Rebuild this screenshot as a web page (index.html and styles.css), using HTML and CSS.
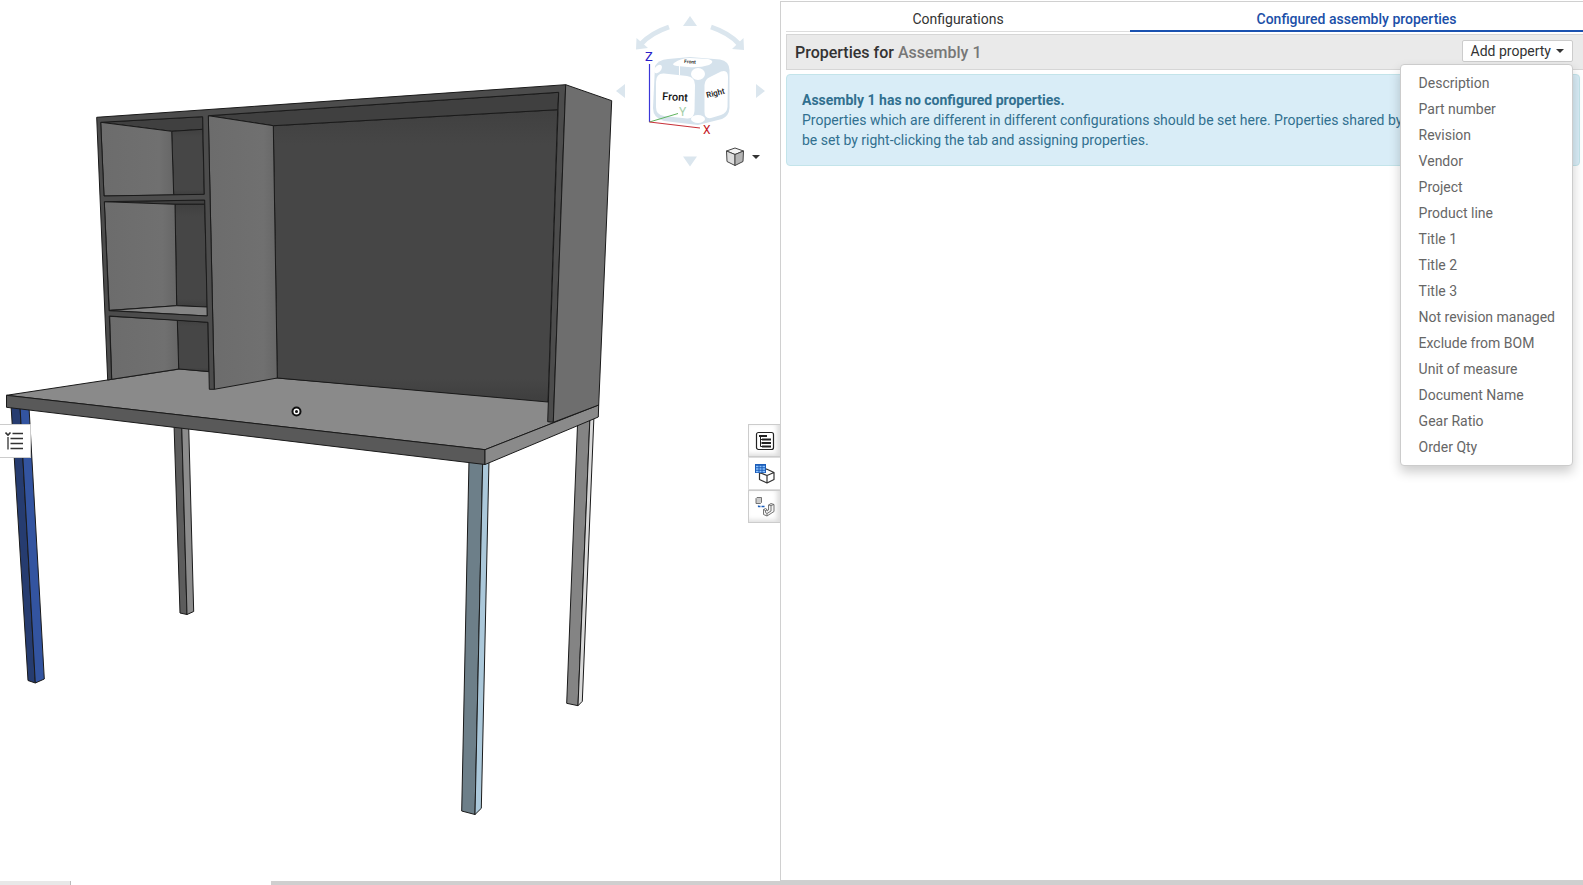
FILE: index.html
```html
<!DOCTYPE html>
<html lang="en">
<head>
    <meta charset="UTF-8">
    <meta name="viewport" content="width=device-width, initial-scale=1.0">
    <title>Assembly 1</title>
    <link rel="stylesheet" href="styles.css">
</head>
<body>
    <main class="workspace">
        <section class="viewport" aria-label="3D view">
            <svg class="scene" viewBox="0 0 780 880" preserveAspectRatio="xMinYMin meet">
                <defs>
                    <linearGradient id="side" x1="0" y1="0" x2="1" y2="0">
                        <stop offset="0" stop-color="#6c6c6c"/>
                        <stop offset="0.8" stop-color="#707070"/>
                        <stop offset="1" stop-color="#666"/>
                    </linearGradient>
                    <linearGradient id="back" x1="0" y1="0" x2="0" y2="1">
                        <stop offset="0" stop-color="#404040"/>
                        <stop offset="0.12" stop-color="#464646"/>
                        <stop offset="0.92" stop-color="#464646"/>
                        <stop offset="1" stop-color="#3e3e3e"/>
                    </linearGradient>
                </defs>
                <g class="edges">
                    <!-- legs -->
                    <polygon fill="#263c70" points="11,405 20,406 35.3,683 28,680.5"/>
                    <polygon fill="#3354a0" points="20,406 29,407 44.3,679 35.3,683"/>
                    <polygon fill="#5c5c5c" points="174,424 181.7,425 187,614.5 180,613"/>
                    <polygon fill="#8c8c8c" points="181.7,425 188.7,426 193.7,611.5 187,614.5"/>
                    <polygon fill="#6d7f89" points="469,460 482.7,462 475,814.5 461.7,811"/>
                    <polygon fill="#abc8da" points="482.7,462 489,460 481.3,808.3 475,814.5"/>
                    <polygon fill="#848484" points="577.7,420 590,416 578,705.7 566.7,703.3"/>
                    <polygon fill="#d8d8d8" points="590,416 594,415 582.3,701.3 578,705.7"/>
                    <!-- desk top -->
                    <polygon fill="#8a8a8a" points="6.5,395.3 180,369 277,378 598.7,405 485,449.7"/>
                    <polygon fill="#595959" points="6.5,395.3 485,449.7 485,464.5 6.5,407.3"/>
                    <polygon fill="#8a8a8a" points="485,449.7 598.7,405 598.3,417 485,464.5"/>
                    <!-- small compartments -->
                    <polygon fill="#404040" points="100.7,122.3 202.7,116.7 202.7,129.3 171.7,131.3"/>
                    <polygon fill="url(#back)" points="171.7,131.3 202.7,129.3 204.3,195 173.7,195"/>
                    <polygon fill="url(#side)" points="100.7,122.3 171.7,131.3 173.7,195 104,196"/>
                    <polygon fill="#404040" points="104.3,201.7 204.7,200 204.7,204.3 175,204.3"/>
                    <polygon fill="url(#back)" points="175,204.3 204.7,204.3 207.3,307 176.7,305.7"/>
                    <polygon fill="url(#side)" points="104.3,201.7 175,204.3 176.7,305.7 109.3,310.3"/>
                    <polygon fill="#858585" points="109.3,310.5 176.7,305.7 207.3,307 207.3,316"/>
                    <polygon fill="url(#back)" points="177.3,320 208,322.3 208.7,371.5 178.7,369"/>
                    <polygon fill="url(#side)" points="109.7,316.3 177.3,320 178.7,369 111.7,379.3"/>
                    <!-- large compartment -->
                    <polygon fill="url(#back)" points="273.3,125.7 557.7,109.7 548,402 277.3,378"/>
                    <polygon fill="#404040" points="208.3,115.7 558.7,92.3 557.7,109.7 273.3,125.7"/>
                    <polygon fill="url(#side)" points="208.3,115.7 273.3,125.7 277.3,378 214.3,389.3"/>
                    <!-- frame -->
                    <path fill="#4c4c4c" d="M96.7 117.3 565.7 84.7 553.3 422.3 547.7 421.7 558.7 92.3 208.3 115.7 214.3 389.3 209.3 389.3 208 322.3 109.3 316 111.7 379.3 107.7 380ZM100.7 122.3 104 196 204.3 194.3 202.7 116.7ZM104.3 201.7 109 310.7 207.3 316 204.7 200Z"/>
                    <polygon fill="#6e6e6e" points="565.7,84.7 611.7,100.7 598.7,405 553.3,422.3"/>
                </g>
                <circle cx="296.5" cy="411.5" r="4" fill="#fff" stroke="#111" stroke-width="2"/>
                <circle cx="296.5" cy="411.5" r="1.5" fill="#111"/>
            </svg>

            <svg class="view-cube" viewBox="610 10 160 160" width="160" height="160">
                <g fill="#dbe6ee">
                    <path d="M690 16 697 26H683ZM683 156.500H697L690 166.500ZM616 91 625 84V98ZM765 91 756 84V98Z"/>
                    <path d="M636.500 38 636 49.500 648 48ZM743.500 38 744 50 732 49Z"/>
                    <path d="M655 66Q658 60 668 59L690 57 720 59.500Q729 61 729.500 70V108Q729 116 722 119L698 125 664 121Q653 118 653 108Z" fill="#d5e2ec"/>
                </g>
                <g fill="none" stroke="#dbe6ee" stroke-width="5">
                    <path d="M669 27Q651 33 641 44"/>
                    <path d="M711 27Q729 33 739 44"/>
                </g>
                <g fill="#fff">
                    <path d="M656 82Q656 73 664 73.500L687 76Q695 77 695 85L694.500 111Q694 119 687 118.500L664 116Q656 115 656 107Z"/>
                    <path d="M704.500 85Q705 79 710 77L721 71.500Q728 69 728 77L727.500 107Q727 113 721 115L711 118Q704.500 119 704.500 112Z"/>
                    <path d="M674 63Q681 58 690 58L708 59Q716 61 709 65 700 68 688 67L677 66Q671 65 674 63Z"/>
                    <ellipse cx="698" cy="74" rx="7" ry="6"/>
                    <ellipse cx="698" cy="119" rx="7" ry="4"/>
                    <ellipse cx="658" cy="69" rx="5" ry="3" transform="rotate(-50 658 69)"/>
                    <path d="M679 65h1v10h-1z"/>
                </g>
                <text class="cube-face" x="662" y="100" font-size="11" transform="rotate(3 662 100)">Front</text>
                <text class="cube-face" x="707" y="98" font-size="8" transform="rotate(-14 707 98)">Right</text>
                <text class="cube-face" x="684" y="63" font-size="5" transform="rotate(4 684 63)">Front</text>
                <path d="M649.500 64V122" stroke="#3a36d8" stroke-width="1.200"/>
                <path d="M649.500 122 678 113.500" stroke="#5fb45f" stroke-width="1"/>
                <path d="M649.500 122 700 128" stroke="#c8323a" stroke-width="1.200"/>
                <text x="645" y="61" font-size="13" fill="#2a20c8">Z</text>
                <text x="679" y="116" font-size="12" fill="#a5cfa8">Y</text>
                <text x="703" y="134" font-size="12" fill="#c4141c">X</text>
            </svg>

            <button type="button" class="view-button" aria-label="View options">
                <svg viewBox="0 0 20 20" width="20" height="20" stroke="#444" stroke-linejoin="round">
                    <path d="M10 1 18.500 4 10 7.500 1.500 4Z" fill="#f4f4f4"/>
                    <path d="M1.500 4 10 7.500V18.500L2 14.500Z" fill="#ddd"/>
                    <path d="M18.500 4 10 7.500V18.500L18 14.500Z" fill="#b4b4b4"/>
                </svg>
                <span class="caret"></span>
            </button>

            <button type="button" class="tree-button" aria-label="Feature list">
                <svg viewBox="0 0 20 20" width="20" height="20" fill="none" stroke="#333" stroke-width="1.300">
                    <path d="M7.500 2.500H18M5.500 7.500H18M5.500 12.500H18M5.500 17.500H18M3 6V18.500"/>
                    <path d="M.5 1.500 3 4 5.500 1.500" stroke-width="1.600"/>
                </svg>
            </button>

            <div class="side-tabs">
                <button type="button" class="side-tab" aria-label="Bill of materials">
                    <svg viewBox="0 0 20 20" width="20" height="20" fill="none" stroke="#222">
                        <rect x="1.500" y="1.500" width="17" height="17" rx="2" stroke-width="1.200"/>
                        <path d="M4 5H12M7 8.500H16M7 12H16M7 15.500H16" stroke-width="2"/>
                        <path d="M5.500 5V15.500H8M5.500 8.500H8M5.500 12H8"/>
                    </svg>
                </button>
                <button type="button" class="side-tab active" aria-label="Configurations panel">
                    <svg viewBox="0 0 20 20" width="20" height="20" fill="none">
                        <path d="M11.500 5 19 8.500V15.500L12 19 4.500 15.500V8.500ZM4.500 8.500 12 11.500 19 8.500M12 11.500V19" stroke="#333" stroke-width="1.200" stroke-linejoin="round"/>
                        <rect x="0" y="0" width="11" height="9" fill="#1b5cb8"/>
                        <path d="M1 2.500H3.500M4.500 2.500H6.500M7.500 2.500H10M1 5H3.500M4.500 5H6.500M7.500 5H10M1 7.500H3.500M4.500 7.500H6.500M7.500 7.500H10" stroke="#8cc4ff" stroke-width="1.300"/>
                    </svg>
                </button>
                <button type="button" class="side-tab" aria-label="Part configurations">
                    <svg viewBox="0 0 20 20" width="20" height="20" fill="none" stroke="#666" stroke-width="0.900" stroke-linejoin="round">
                        <path d="M1 1.500 2 .500H6.500V5.500L5.500 6.500H1Z" fill="#ccc"/>
                        <path d="M3.500 8.500V9.500H10" stroke="#1b5cb8" stroke-width="1.300" stroke-dasharray="3 1"/>
                        <path d="M8.500 12.500 10.500 11.500 12 12.500V14L13.500 13V8L16 6.500 19 7.500V14.500L12 19 8.500 17.500Z" fill="#f4f4f4"/>
                        <path d="M8.500 12.500 10.500 13.500V15.500L12 16.500 16 14V8.500L13.500 8M16 8.500 19 7.500M12 16.500V19M10.500 13.500 12 12.500"/>
                    </svg>
                </button>
            </div>
        </section>

        <section class="panel">
            <nav class="tabs">
                <a class="tab" href="#configurations">Configurations</a>
                <a class="tab active" href="#properties">Configured assembly properties</a>
            </nav>
            <header class="panel-header">
                <h1 class="panel-title">Properties for <span class="panel-name">Assembly 1</span></h1>
                <div class="dropdown">
                    <button type="button" class="add-button" aria-haspopup="true" aria-expanded="true">Add property <span class="caret"></span></button>
                    <ul class="menu">
                        <li><a href="#">Description</a></li>
                        <li><a href="#">Part number</a></li>
                        <li><a href="#">Revision</a></li>
                        <li><a href="#">Vendor</a></li>
                        <li><a href="#">Project</a></li>
                        <li><a href="#">Product line</a></li>
                        <li><a href="#">Title 1</a></li>
                        <li><a href="#">Title 2</a></li>
                        <li><a href="#">Title 3</a></li>
                        <li><a href="#">Not revision managed</a></li>
                        <li><a href="#">Exclude from BOM</a></li>
                        <li><a href="#">Unit of measure</a></li>
                        <li><a href="#">Document Name</a></li>
                        <li><a href="#">Gear Ratio</a></li>
                        <li><a href="#">Order Qty</a></li>
                    </ul>
                </div>
            </header>
            <div class="alert">
                <strong>Assembly 1 has no configured properties.</strong>
                <p>Properties which are different in different configurations should be set here. Properties shared by all configurations should be set by right-clicking the tab and assigning properties.</p>
            </div>
        </section>
    </main>
    <footer class="doc-tabs">
        <div class="doc-tab"></div>
        <div class="doc-tab current"></div>
    </footer>
</body>
</html>
```
FILE: styles.css
```css
* {
    box-sizing: border-box;
}
body {
    margin: 0;
    min-height: 100vh;
    display: flex;
    flex-direction: column;
    font-family: Roboto, Arial, sans-serif;
    font-size: 14px;
    line-height: 20px;
    color: #333;
    background: #fff;
}
button {
    font: inherit;
    color: inherit;
    cursor: pointer;
}
a {
    text-decoration: none;
}
.workspace {
    flex: 1;
    display: grid;
    grid-template-columns: 780fr 803fr;
}

/* 3D view */
.viewport {
    position: relative;
    overflow: hidden;
}
.scene {
    display: block;
    width: 100%;
}
.edges {
    stroke: #1a1a1a;
    stroke-width: 1;
    stroke-linejoin: round;
}
.view-cube {
    position: absolute;
    top: 10px;
    right: 10px;
}
.cube-face {
    fill: #111;
    font-weight: 500;
}
.view-button {
    position: absolute;
    top: 147px;
    right: 20px;
    display: flex;
    align-items: center;
    gap: 7px;
    padding: 0;
    border: 0;
    background: none;
}
.caret {
    display: inline-block;
    border: 4px solid transparent;
    border-top-color: currentColor;
    border-bottom: 0;
}
.tree-button {
    position: absolute;
    top: 424px;
    left: 0;
    display: flex;
    padding: 6px 5px;
    border: 1px solid #ccc;
    border-left: 0;
    background: #fff;
}
.side-tabs {
    position: absolute;
    top: 424px;
    right: 0;
    width: 32px;
}
.side-tab {
    display: flex;
    align-items: center;
    justify-content: center;
    width: 100%;
    height: 33px;
    padding: 0;
    border: 1px solid #ccc;
    border-right: 0;
    background: #fff;
    box-shadow: inset -3px -2px 5px #ddd;
}
.side-tab.active {
    border-color: #ddd;
    box-shadow: none;
}

/* Properties panel */
.panel {
    padding-left: 5px;
    border: 1px solid #d0d0d0;
    border-right: 0;
    margin-top: 1px;
}
.tabs {
    display: flex;
}
.tab {
    flex: 1 1 auto;
    padding: 7px 0 2px;
    border-bottom: 1px solid #ddd;
    text-align: center;
    color: #333;
}
.tab.active {
    padding-bottom: 1px;
    border-bottom: 2px solid #1b52b0;
    font-weight: 500;
    color: #1b4fa8;
}
.panel-header {
    display: flex;
    align-items: center;
    justify-content: space-between;
    height: 36px;
    margin-top: 2px;
    padding: 0 10px 2px 8px;
    border: 1px solid #d6d6d6;
    border-right: 0;
    background: #eaeaea;
}
.panel-title {
    margin: 0;
    padding-top: 4px;
    font-size: 16px;
    font-weight: 500;
}
.panel-name {
    color: #777;
}
.dropdown {
    position: relative;
}
.add-button {
    display: flex;
    align-items: center;
    gap: 5px;
    padding: 0 8px;
    border: 1px solid #ccc;
    border-radius: 2px;
    background: #fff;
}
.menu {
    position: absolute;
    top: 24px;
    right: 0;
    z-index: 1;
    margin: 0;
    padding: 5px 0;
    list-style: none;
    border: 1px solid #ccc;
    border-radius: 4px;
    background: #fff;
    box-shadow: 0 6px 12px rgba(0, 0, 0, 0.2);
}
.menu a {
    display: block;
    padding: 3px 17px 3px 18px;
    color: #666;
    white-space: nowrap;
}
.alert {
    margin: 4px 3px 0 0;
    padding: 15px;
    border: 1px solid #c3e4ea;
    border-radius: 4px;
    background: #d9edf7;
    color: #31708f;
}
.alert strong {
    display: block;
}
.alert p {
    margin: 0;
}

/* Document tabs along the bottom */
.doc-tabs {
    display: flex;
    height: 4px;
    background: #cfcfcf;
}
.doc-tab {
    width: 71px;
    border-right: 1px solid #bbb;
    background: #e8e8e8;
}
.doc-tab.current {
    width: 200px;
    border-right: 0;
    background: #fff;
}
```
